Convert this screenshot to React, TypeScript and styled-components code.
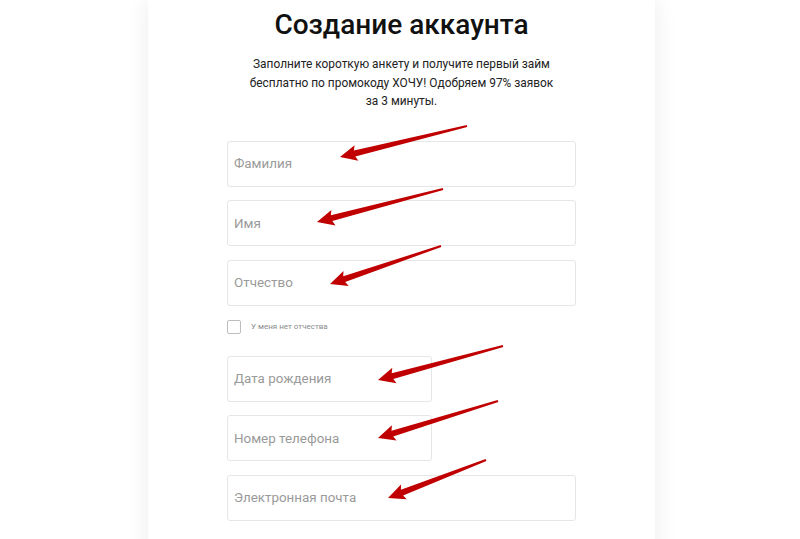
import React from "react";
import styled, { createGlobalStyle } from "styled-components";

const GlobalStyle = createGlobalStyle`
  html, body {
    margin: 0;
    padding: 0;
    background: #ffffff;
    font-family: Roboto, "Noto Sans", sans-serif;
  }
`;

interface ArrowSpec {
  from: [number, number];
  to: [number, number];
}

const arrows: ArrowSpec[] = [
  { from: [467, 126], to: [340, 157] },
  { from: [443, 189], to: [317, 222] },
  { from: [441, 246], to: [330, 284] },
  { from: [503, 346], to: [378, 380] },
  { from: [498, 401], to: [378, 438] },
  { from: [486, 460], to: [388, 498] },
];

// builds the polygon of a hand-drawn style arrow, tapering from tail to head
const arrowPoints = ({ from, to }: ArrowSpec) => {
  const dx = to[0] - from[0];
  const dy = to[1] - from[1];
  const len = Math.hypot(dx, dy);
  const ux = dx / len;
  const uy = dy / len;
  const nx = -uy;
  const ny = ux;
  const headLen = 15;
  const neckX = to[0] - ux * headLen;
  const neckY = to[1] - uy * headLen;
  const pts: [number, number][] = [
    [from[0] + nx * 1, from[1] + ny * 1],
    [neckX + nx * 3, neckY + ny * 3],
    [neckX - ux * 2 + nx * 8, neckY - uy * 2 + ny * 8],
    [to[0], to[1]],
    [neckX - ux * 2 - nx * 8, neckY - uy * 2 - ny * 8],
    [neckX - nx * 3, neckY - ny * 3],
    [from[0] - nx * 1, from[1] - ny * 1],
  ];
  return pts.map((p) => p.map((v) => v.toFixed(1)).join(",")).join(" ");
};

const fields = [
  { placeholder: "Фамилия", short: false },
  { placeholder: "Имя", short: false },
  { placeholder: "Отчество", short: false },
];

const contactFields = [
  { placeholder: "Дата рождения", short: true },
  { placeholder: "Номер телефона", short: true },
  { placeholder: "Электронная почта", short: false },
];

const App: React.FC = () => {
  return (
    <>
      <GlobalStyle />
      <Page>
        <Card>
          <Title>Создание аккаунта</Title>
          <Subtitle>
            Заполните короткую анкету и получите первый займ
            <br />
            бесплатно по промокоду ХОЧУ! Одобряем 97% заявок
            <br />
            за 3 минуты.
          </Subtitle>
          <Form>
            <FieldGroup>
              {fields.map((f) => (
                <Input key={f.placeholder} placeholder={f.placeholder} $short={f.short} />
              ))}
            </FieldGroup>
            <CheckRow>
              <CheckBox type="checkbox" />
              <CheckLabel>У меня нет отчества</CheckLabel>
            </CheckRow>
            <FieldGroup>
              {contactFields.map((f) => (
                <Input key={f.placeholder} placeholder={f.placeholder} $short={f.short} />
              ))}
            </FieldGroup>
          </Form>
        </Card>
        <Annotations width="800" height="539" viewBox="0 0 800 539">
          {arrows.map((a, i) => (
            <polygon key={i} points={arrowPoints(a)} fill="#c00000" />
          ))}
        </Annotations>
      </Page>
    </>
  );
};

const Page = styled.div`
  position: relative;
  width: 800px;
  height: 539px;
  overflow: hidden;
  display: flex;
  justify-content: center;
  padding-left: 3px;
  box-sizing: border-box;
`;

const Card = styled.div`
  width: 507px;
  box-sizing: border-box;
  padding: 8px 79px 40px;
  background: #ffffff;
  box-shadow: 0 0 22px rgba(0, 0, 0, 0.08);
  display: flex;
  flex-direction: column;
  align-items: center;
  align-self: flex-start;
  min-height: 600px;
`;

const Title = styled.h1`
  margin: 0;
  font-size: 28px;
  line-height: 34px;
  font-weight: 500;
  color: #111111;
  text-align: center;
`;

const Subtitle = styled.p`
  margin: 13px 0 0;
  font-size: 11.9px;
  line-height: 18.5px;
  color: #222222;
  text-align: center;
`;

const Form = styled.div`
  margin-top: 30px;
  width: 100%;
  display: flex;
  flex-direction: column;
`;

const FieldGroup = styled.div`
  display: flex;
  flex-direction: column;
  gap: 13.5px;
`;

const Input = styled.input<{ $short?: boolean }>`
  box-sizing: border-box;
  width: ${(p) => (p.$short ? "205px" : "100%")};
  height: 46px;
  padding: 0 6px;
  border: 1px solid #e6e6e6;
  border-radius: 3px;
  font-family: Roboto, "Noto Sans", sans-serif;
  font-size: 13.4px;
  color: #333333;
  outline: none;

  &::placeholder {
    color: #9a9a9a;
  }
`;

const CheckRow = styled.label`
  display: flex;
  align-items: center;
  gap: 10px;
  margin: 14px 0 22px;
`;

const CheckBox = styled.input`
  appearance: none;
  margin: 0;
  width: 14px;
  height: 14px;
  border: 1px solid #bdbdbd;
  border-radius: 2px;
  background: #ffffff;
`;

const CheckLabel = styled.span`
  font-size: 8px;
  color: #8a8a8a;
`;

const Annotations = styled.svg`
  position: absolute;
  left: 0;
  top: 0;
  pointer-events: none;
`;

export default App;
